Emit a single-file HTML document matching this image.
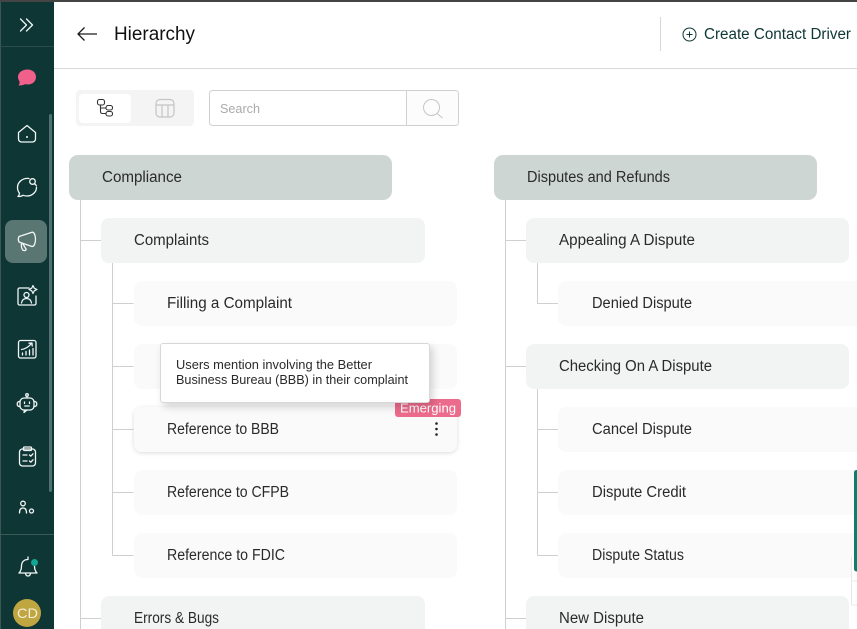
<!DOCTYPE html>
<html lang="en"><head><meta charset="utf-8"><title>Hierarchy</title>
<style>
html,body{margin:0;padding:0;width:857px;height:629px;overflow:hidden;background:#fff}
svg{display:block}
text{font-family:"Liberation Sans",sans-serif;font-size:15.5px;fill:#2a2a2a}
.i{fill:none;stroke:#f2f6f5;stroke-width:1.3;stroke-linecap:round;stroke-linejoin:round}
.l{fill:none;stroke:#cdcfd1;stroke-width:1}
</style></head><body>
<svg width="857" height="629" viewBox="0 0 857 629" xmlns="http://www.w3.org/2000/svg">
<defs>
<filter id="s1" x="-10%" y="-30%" width="120%" height="170%"><feDropShadow dx="3" dy="4" stdDeviation="4" flood-color="#000" flood-opacity=".16"/></filter>
<filter id="s2" x="-5%" y="-20%" width="110%" height="150%"><feDropShadow dx="0" dy="1" stdDeviation="2" flood-color="#000" flood-opacity=".14"/></filter>
</defs>
<rect width="857" height="629" fill="#fff"/>
<!-- sidebar -->
<rect width="54" height="629" fill="#0e3635"/>
<rect width="1" height="629" fill="#3c5654"/>
<rect x="0" y="46" width="54" height="1" fill="#2a4c4a"/>
<rect x="0" y="534" width="54" height="1" fill="#3a5a58"/>
<rect x="49" y="114" width="3" height="378" rx="1.500" fill="#4e716d"/>
<rect x="5" y="220" width="42" height="43" rx="8" fill="#5a7673"/>
<!-- chevrons -->
<path class="i" d="M20.500 19l6 6-6 6M26.500 19l6 6-6 6"/>
<!-- pink chat -->
<path d="M27.500 69.500c5 0 8.500 3.300 8.500 7.500s-3.500 7.500-8 7.500c-1 0-2-.1-2.800-.4-2 1-4.500 1.600-6.700 1.300 1-1.200 1.300-2.700 1-4-.9-1.300-1.500-2.800-1.500-4.400 0-4.200 4-7.500 9.500-7.500z" fill="#f0608a"/>
<!-- home -->
<path class="i" d="M27 125.500l-8.500 7v6.500a3 3 0 0 0 3 3h11a3 3 0 0 0 3-3v-6.500z"/>
<circle cx="27" cy="137" r="1" fill="#f2f6f5"/>
<!-- chat search -->
<path class="i" d="M29 178.500c-6-1-11.500 3.500-11.500 9 0 2.300.8 4.200 2 5.800-.2 1.300-.8 2.500-1.500 3.200 2 .1 3.900-.4 5-1.200 1.300.5 2.600.7 4 .7 5.300 0 9.500-4 9.500-8.800"/>
<circle class="i" cx="32.500" cy="181.500" r="2.800"/>
<path class="i" d="M34.800 184l1.500 1.500"/>
<!-- megaphone -->
<path class="i" d="M19 236.500l13-4.300c2-.4 3.500 3 3.500 7s-1.500 7.500-3.500 7.300l-13-4.500c-.7-1.500-.7-4 0-5.500z"/>
<path class="i" d="M23 244l3.300 5.500c-.8 1.500-3 1.500-3.900 0-1-1.500-1.200-3.300-.9-6"/>
<!-- person card -->
<path class="i" d="M29 288H19.500a1.500 1.500 0 0 0-1.500 1.500v14a1.500 1.500 0 0 0 1.500 1.500h15a1.500 1.500 0 0 0 1.500-1.500V296"/>
<circle class="i" cx="26.500" cy="295" r="2.500"/>
<path class="i" d="M21.500 303c.5-3 2.500-4.500 5-4.500s4.500 1.500 5 4.500"/>
<path d="M33 285.500l1.300 2.700 2.700 1.300-2.700 1.300-1.300 2.700-1.300-2.700-2.700-1.300 2.700-1.300z" fill="none" stroke="#f2f6f5" stroke-width="1.200" stroke-linejoin="round"/>
<!-- chart -->
<rect class="i" x="18.500" y="340.500" width="17.500" height="17.500" rx="2"/>
<path class="i" d="M21.500 349.500c3.500-.5 7-2.500 10-6M29 343.200l3-.2.200 3M22.500 355v-2M26 355v-3.500M29.500 355v-5M33 355v-6.500"/>
<!-- bot -->
<rect class="i" x="20" y="398" width="14" height="12" rx="4"/>
<circle class="i" cx="27" cy="395" r="1.300"/>
<path class="i" d="M27 396.500v1.500M20 401.500c-2-.2-2.800 1-2.800 2.500s.8 2.700 2.800 2.500M34 401.500c2-.2 2.800 1 2.800 2.500s-.8 2.700-2.800 2.500M24.500 402v1.500M29.500 402v1.500M24.800 406h4.400M24.500 410l-.5 2.500 3-2.500"/>
<!-- clipboard -->
<rect class="i" x="19.500" y="449" width="16" height="17" rx="3"/>
<rect class="i" x="23.500" y="447" width="8" height="3.500" rx="1"/>
<path class="i" d="M23 455h4M23 461h4M29.500 455l1.300 1.200 2.200-2.400M29.500 461l1.300 1.200 2.200-2.400"/>
<!-- person small -->
<circle class="i" cx="23" cy="503.500" r="2.300"/>
<path class="i" d="M19.500 513c0-3 1-5 3.500-5s3.500 2 3.500 5"/>
<circle class="i" cx="31.500" cy="511" r="2"/>
<!-- bell -->
<path class="i" d="M28 559.500c-4.500 0-6.500 3-6.500 6.500 0 3.500-1 5.500-2.500 7h18c-1.500-1.500-2.500-3.500-2.500-7M25.500 573.500c.3 1.500 1.300 2.500 2.500 2.500s2.200-1 2.500-2.500M28 557v2"/>
<circle cx="34.500" cy="562.500" r="3.500" fill="#12a591"/>
<!-- avatar -->
<circle cx="27" cy="613" r="14" fill="#bfa640"/>
<text x="17" y="618" textLength="21" lengthAdjust="spacingAndGlyphs" style="font-size:14px;fill:#f4efd8">CD</text>

<!-- header -->
<rect x="0" y="0" width="857" height="2" fill="#444"/>
<rect x="54" y="68" width="803" height="1" fill="#d9d9d9"/>
<rect x="660" y="17" width="1" height="34" fill="#d6d6d6"/>
<path d="M78 34h19M84.500 27.500L78 34l6.500 6.500" fill="none" stroke="#1c1c1c" stroke-width="1.300"/>
<text x="114" y="40" textLength="81" lengthAdjust="spacingAndGlyphs" style="font-size:19px;fill:#111">Hierarchy</text>
<circle cx="689.500" cy="34.500" r="6.500" fill="none" stroke="#0e3635" stroke-width="1"/>
<path d="M689.500 31.500v6M686.500 34.500h6" stroke="#0e3635" stroke-width="1"/>
<text x="704" y="39" textLength="147" lengthAdjust="spacingAndGlyphs" style="font-size:15.500px;fill:#0e3635">Create Contact Driver</text>

<!-- toggle -->
<rect x="76" y="90" width="118" height="36" rx="4" fill="#f4f4f4"/>
<rect x="79" y="94" width="52" height="29" rx="4" fill="#fff"/>
<g fill="none" stroke="#333" stroke-width="1.100">
<rect x="97.500" y="99.500" width="7" height="5.500" rx="2"/>
<rect x="106" y="105.500" width="6.500" height="4.500" rx="2"/>
<rect x="106" y="111.500" width="6.500" height="4.500" rx="2"/>
<path d="M100.500 105v6.500c0 1.500 1 2 2 2h3.500M100.500 108h5.500"/>
</g>
<g fill="none" stroke="#c4c4c4" stroke-width="1.200">
<rect x="156" y="99.500" width="18" height="17.500" rx="4"/>
<path d="M156 105h18M162 105v12M168 105v12"/>
</g>
<!-- search -->
<rect x="209.500" y="90.500" width="249" height="35" rx="3" fill="#fff" stroke="#d0d0d0"/>
<path d="M406.500 91h49a2.500 2.500 0 0 1 2.500 2.500v29a2.500 2.500 0 0 1-2.500 2.500h-49z" fill="#fcfcfc"/>
<rect x="406" y="91" width="1" height="34" fill="#d0d0d0"/>
<text x="220" y="113" textLength="40" lengthAdjust="spacingAndGlyphs" style="font-size:13px;fill:#aaa">Search</text>
<circle cx="431.500" cy="107.500" r="8" fill="none" stroke="#c6c6c6" stroke-width="1"/>
<path d="M437 113.500l5.500 4.500" stroke="#c6c6c6" stroke-width="1"/>

<!-- connector lines -->
<path class="l" d="M80.500 200V629M80 240.500h21M80 618.500h21M112.500 263V555.500M112.500 303.500h21M112.500 366.500h21M112.500 429.500h21M112.500 492.500h21M112.500 555.500h21"/>
<path class="l" d="M505.500 200V629M505 240.500h21M505 366.500h21M505 618.500h21M537.500 263V303.500h21M537.500 389V555.500M537.500 429.500h21M537.500 492.500h21M537.500 555.500h21"/>

<!-- left column -->
<rect x="69" y="155" width="323" height="45" rx="9" fill="#ced6d4"/>
<text x="102" y="182" textLength="80" lengthAdjust="spacingAndGlyphs">Compliance</text>
<rect x="101" y="218" width="324" height="45" rx="8" fill="#f2f4f3"/>
<text x="134" y="245" textLength="75" lengthAdjust="spacingAndGlyphs">Complaints</text>
<rect x="134" y="281" width="323" height="45" rx="8" fill="#fafafa"/>
<text x="167" y="308" textLength="125" lengthAdjust="spacingAndGlyphs">Filling a Complaint</text>
<rect x="134" y="344" width="323" height="45" rx="8" fill="#fafafa"/>
<rect x="134" y="407" width="323" height="45" rx="8" fill="#fafafa" filter="url(#s2)"/>
<text x="167" y="434" textLength="112" lengthAdjust="spacingAndGlyphs">Reference to BBB</text>
<g fill="#222"><circle cx="436.500" cy="423.500" r="1.300"/><circle cx="436.500" cy="429" r="1.300"/><circle cx="436.500" cy="434.500" r="1.300"/></g>
<rect x="134" y="470" width="323" height="45" rx="8" fill="#fafafa"/>
<text x="167" y="497" textLength="122" lengthAdjust="spacingAndGlyphs">Reference to CFPB</text>
<rect x="134" y="533" width="323" height="45" rx="8" fill="#fafafa"/>
<text x="167" y="560" textLength="118" lengthAdjust="spacingAndGlyphs">Reference to FDIC</text>
<rect x="101" y="596" width="324" height="45" rx="8" fill="#f2f4f3"/>
<text x="134" y="623" textLength="85" lengthAdjust="spacingAndGlyphs">Errors &amp; Bugs</text>

<!-- right column -->
<rect x="494" y="155" width="323" height="45" rx="9" fill="#ced6d4"/>
<text x="527" y="182" textLength="143" lengthAdjust="spacingAndGlyphs">Disputes and Refunds</text>
<rect x="526" y="218" width="323" height="45" rx="8" fill="#f2f4f3"/>
<text x="559" y="245" textLength="136" lengthAdjust="spacingAndGlyphs">Appealing A Dispute</text>
<rect x="558" y="281" width="323" height="45" rx="8" fill="#fafafa"/>
<text x="592" y="308" textLength="100" lengthAdjust="spacingAndGlyphs">Denied Dispute</text>
<rect x="526" y="344" width="323" height="45" rx="8" fill="#f2f4f3"/>
<text x="559" y="371" textLength="153" lengthAdjust="spacingAndGlyphs">Checking On A Dispute</text>
<rect x="558" y="407" width="323" height="45" rx="8" fill="#fafafa"/>
<text x="592" y="434" textLength="100" lengthAdjust="spacingAndGlyphs">Cancel Dispute</text>
<rect x="558" y="470" width="323" height="45" rx="8" fill="#fafafa"/>
<text x="592" y="497" textLength="94" lengthAdjust="spacingAndGlyphs">Dispute Credit</text>
<rect x="558" y="533" width="323" height="45" rx="8" fill="#fafafa"/>
<text x="592" y="560" textLength="92" lengthAdjust="spacingAndGlyphs">Dispute Status</text>
<rect x="526" y="596" width="323" height="45" rx="8" fill="#f2f4f3"/>
<text x="559" y="623" textLength="85" lengthAdjust="spacingAndGlyphs">New Dispute</text>

<!-- edge widget -->
<rect x="851" y="557" width="6" height="48" fill="#fff"/>
<path d="M851.500 557v48M851 581h6M851 605h6" stroke="#e8e8e8" fill="none"/>
<path d="M857 470h-.5a2.500 2.500 0 0 0-2.500 2.500V569a2.500 2.500 0 0 0 2.500 2.500h.5z" fill="#0a7f70"/>

<!-- emerging badge + tooltip -->
<rect x="395" y="399" width="66" height="18" rx="3" fill="#ec6a8b"/>
<text x="400" y="412.500" textLength="56" lengthAdjust="spacingAndGlyphs" style="font-size:13px;fill:#fff">Emerging</text>
<rect x="160.500" y="343.500" width="269" height="59" rx="2.500" fill="#fff" stroke="#d8d8d8" filter="url(#s1)"/>
<text x="176" y="369" textLength="196" lengthAdjust="spacingAndGlyphs" style="font-size:13px">Users mention involving the Better</text>
<text x="176" y="384" textLength="232" lengthAdjust="spacingAndGlyphs" style="font-size:13px">Business Bureau (BBB) in their complaint</text>
</svg>
</body></html>
